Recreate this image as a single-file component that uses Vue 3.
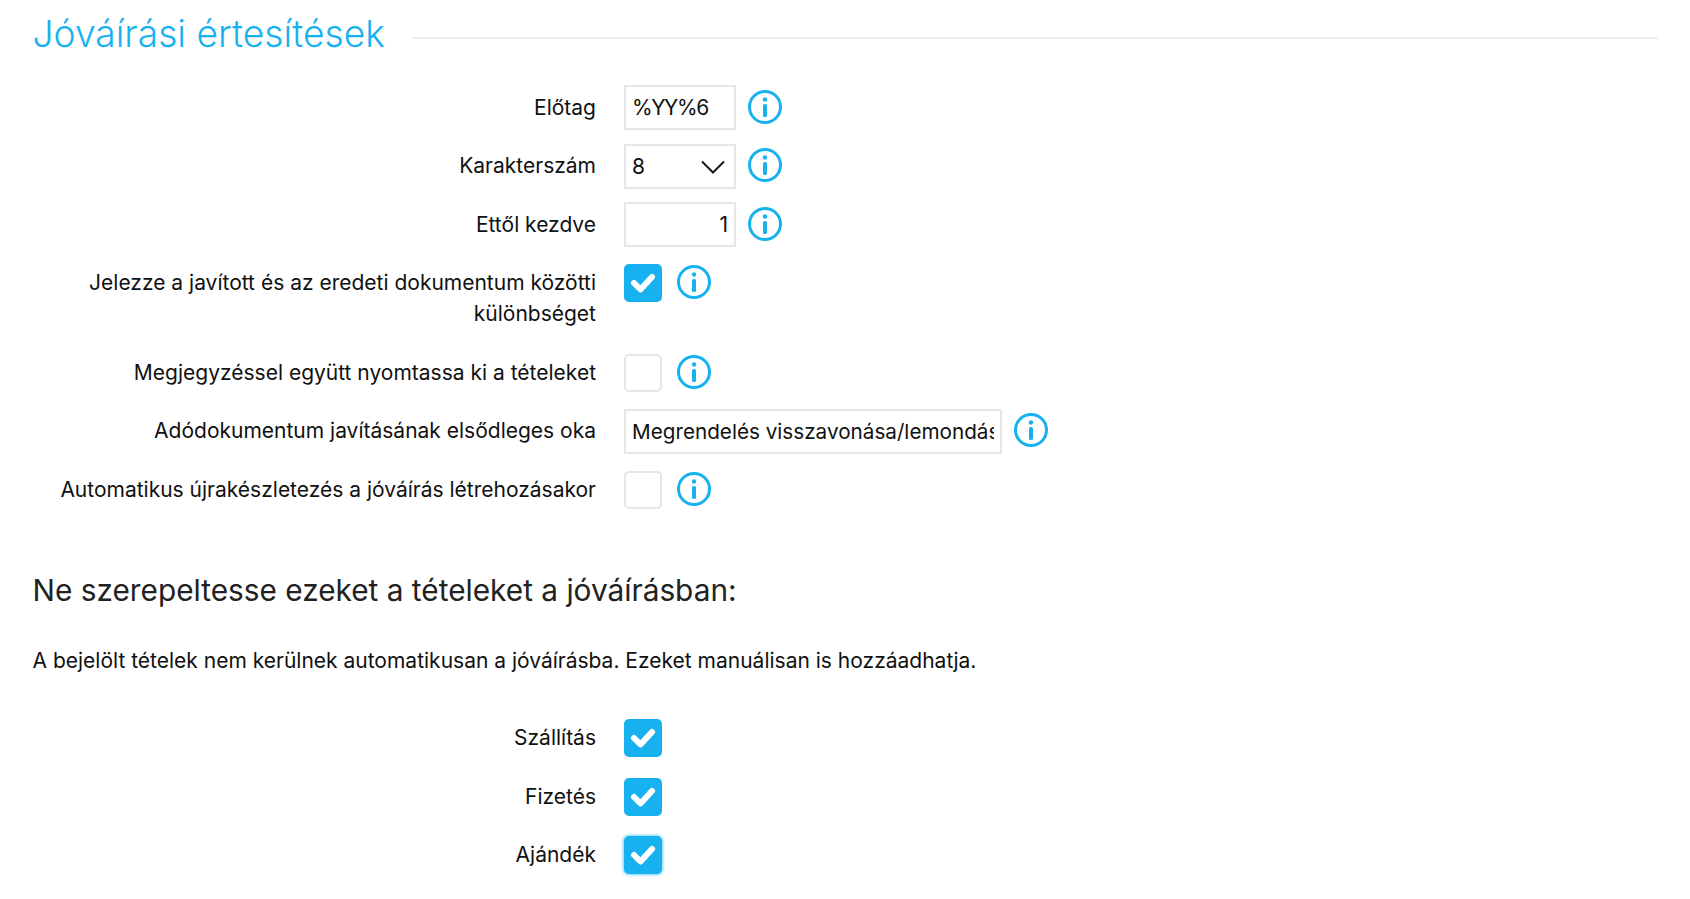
<script setup>
const top = [
  { label: 'Előtag', type: 'text', value: '%YY%6' },
  { label: 'Karakterszám', type: 'select', value: '8' },
  { label: 'Ettől kezdve', type: 'num', value: '1' },
  { label: 'Jelezze a javított és az eredeti dokumentum közötti különbséget', type: 'check', on: true, tall: true },
  { label: 'Megjegyzéssel együtt nyomtassa ki a tételeket', type: 'check', on: false },
  { label: 'Adódokumentum javításának elsődleges oka', type: 'wide', value: 'Megrendelés visszavonása/lemondása' },
  { label: 'Automatikus újrakészletezés a jóváírás létrehozásakor', type: 'check', on: false },
]
const bottom = ['Szállítás', 'Fizetés', 'Ajándék']
</script>

<template>
  <main class="page">
    <div class="title-row">
      <h1>Jóváírási értesítések</h1>
      <span class="rule"></span>
    </div>

    <div class="form">
      <div v-for="r in top" :key="r.label" class="row" :class="{ tall: r.tall }">
        <label class="lbl">{{ r.label }}</label>
        <div class="ctl">
          <input v-if="r.type === 'text'" class="inp small tight" type="text" :value="r.value" />
          <div v-else-if="r.type === 'select'" class="sel-wrap">
            <select class="inp small sel"><option>{{ r.value }}</option></select>
            <svg class="chev" width="26" height="16" viewBox="0 0 26 16"><path d="M2 2.5 13 13.5 24 2.5" fill="none" stroke="#1a1a1a" stroke-width="2"/></svg>
          </div>
          <input v-else-if="r.type === 'num'" class="inp small right" type="text" :value="r.value" />
          <input v-else-if="r.type === 'wide'" class="inp wide" type="text" :value="r.value" />
          <span v-else class="cb" :class="{ on: r.on }">
            <svg v-if="r.on" width="26" height="20" viewBox="0 0 26 20"><path d="M4 10 10.5 16.5 22 4" fill="none" stroke="#fff" stroke-width="6" stroke-linecap="round" stroke-linejoin="round"/></svg>
          </span>
          <svg class="info" width="36" height="36" viewBox="0 0 36 36">
            <circle cx="18" cy="18" r="15.5" fill="none" stroke="#17b1f0" stroke-width="3"/>
            <circle cx="18" cy="10.5" r="2.2" fill="#17b1f0"/>
            <rect x="16" y="15" width="4" height="13" rx="1.6" fill="#17b1f0"/>
          </svg>
        </div>
      </div>
    </div>

    <h2>Ne szerepeltesse ezeket a tételeket a jóváírásban:</h2>
    <p>A bejelölt tételek nem kerülnek automatikusan a jóváírásba. Ezeket manuálisan is hozzáadhatja.</p>

    <div class="form bottom">
      <div v-for="(b, i) in bottom" :key="b" class="row">
        <label class="lbl">{{ b }}</label>
        <div class="ctl">
          <span class="cb on" :class="{ focus: i === 2 }">
            <svg width="26" height="20" viewBox="0 0 26 20"><path d="M4 10 10.5 16.5 22 4" fill="none" stroke="#fff" stroke-width="6" stroke-linecap="round" stroke-linejoin="round"/></svg>
          </span>
        </div>
      </div>
    </div>
  </main>
</template>

<style>
html, body { background: #fff; overflow: hidden; }
</style>

<style scoped>
.page {
  box-sizing: border-box;
  width: 1690px;
  height: 899px;
  padding: 12px 32px 0 32.5px;
  font-family: Inter, "Noto Sans", sans-serif;
  font-size: 21px;
  color: #111;
}
.title-row { display: flex; align-items: center; gap: 27px; height: 44px; }
h1 {
  margin: 0;
  font-size: 37.2px;
  font-weight: 300;
  line-height: 44px;
  color: #17b1f0;
  white-space: nowrap;
}
.rule { flex: 1; height: 2px; background: #eee; margin-top: 8px; }
.form { margin-top: 29px; display: flex; flex-direction: column; }
.row { display: flex; min-height: 45px; margin-bottom: 13.5px; }
.row.tall { min-height: 76px; }
.lbl {
  width: 563.5px;
  flex: none;
  text-align: right;
  line-height: 31px;
  padding-top: 6.5px;
  box-sizing: border-box;
}
.ctl { margin-left: 28px; display: flex; align-items: center; gap: 11px; height: 45px; }
.inp {
  box-sizing: border-box;
  height: 45px;
  border: 2px solid #e6e6e6;
  border-radius: 0;
  background: #fff;
  font: inherit;
  color: #111;
  padding: 0 6px;
  outline: none;
  display: block;
}
.small { width: 112px; }
.tight { letter-spacing: -1.4px; }
.right { text-align: right; }
.wide { width: 378px; padding: 1px 6px 0 6px; font-size: 20.7px; }
.sel-wrap { position: relative; }
.sel { appearance: none; -webkit-appearance: none; }
.chev { position: absolute; right: 10px; top: 15px; pointer-events: none; }
.info { flex: none; margin-top: -1.5px; }
.cb {
  box-sizing: border-box;
  width: 38px;
  height: 38px;
  flex: none;
  border: 2px solid #e6e6e6;
  border-radius: 5px;
  background: #fff;
  display: flex;
  align-items: center;
  justify-content: center;
  margin-right: 3px;
}
.cb.on { background: #17b1f0; border-color: #17b1f0; }
.cb.focus { box-shadow: 0 0 3px 1px rgba(23, 177, 240, .6); }
h2 {
  margin: 44.5px 0 0;
  font-size: 29.8px;
  font-weight: 400;
  line-height: 40px;
  color: #222;
}
p { margin: 36px 0 0; line-height: 30px; }
.bottom { margin-top: 39.5px; }
</style>
